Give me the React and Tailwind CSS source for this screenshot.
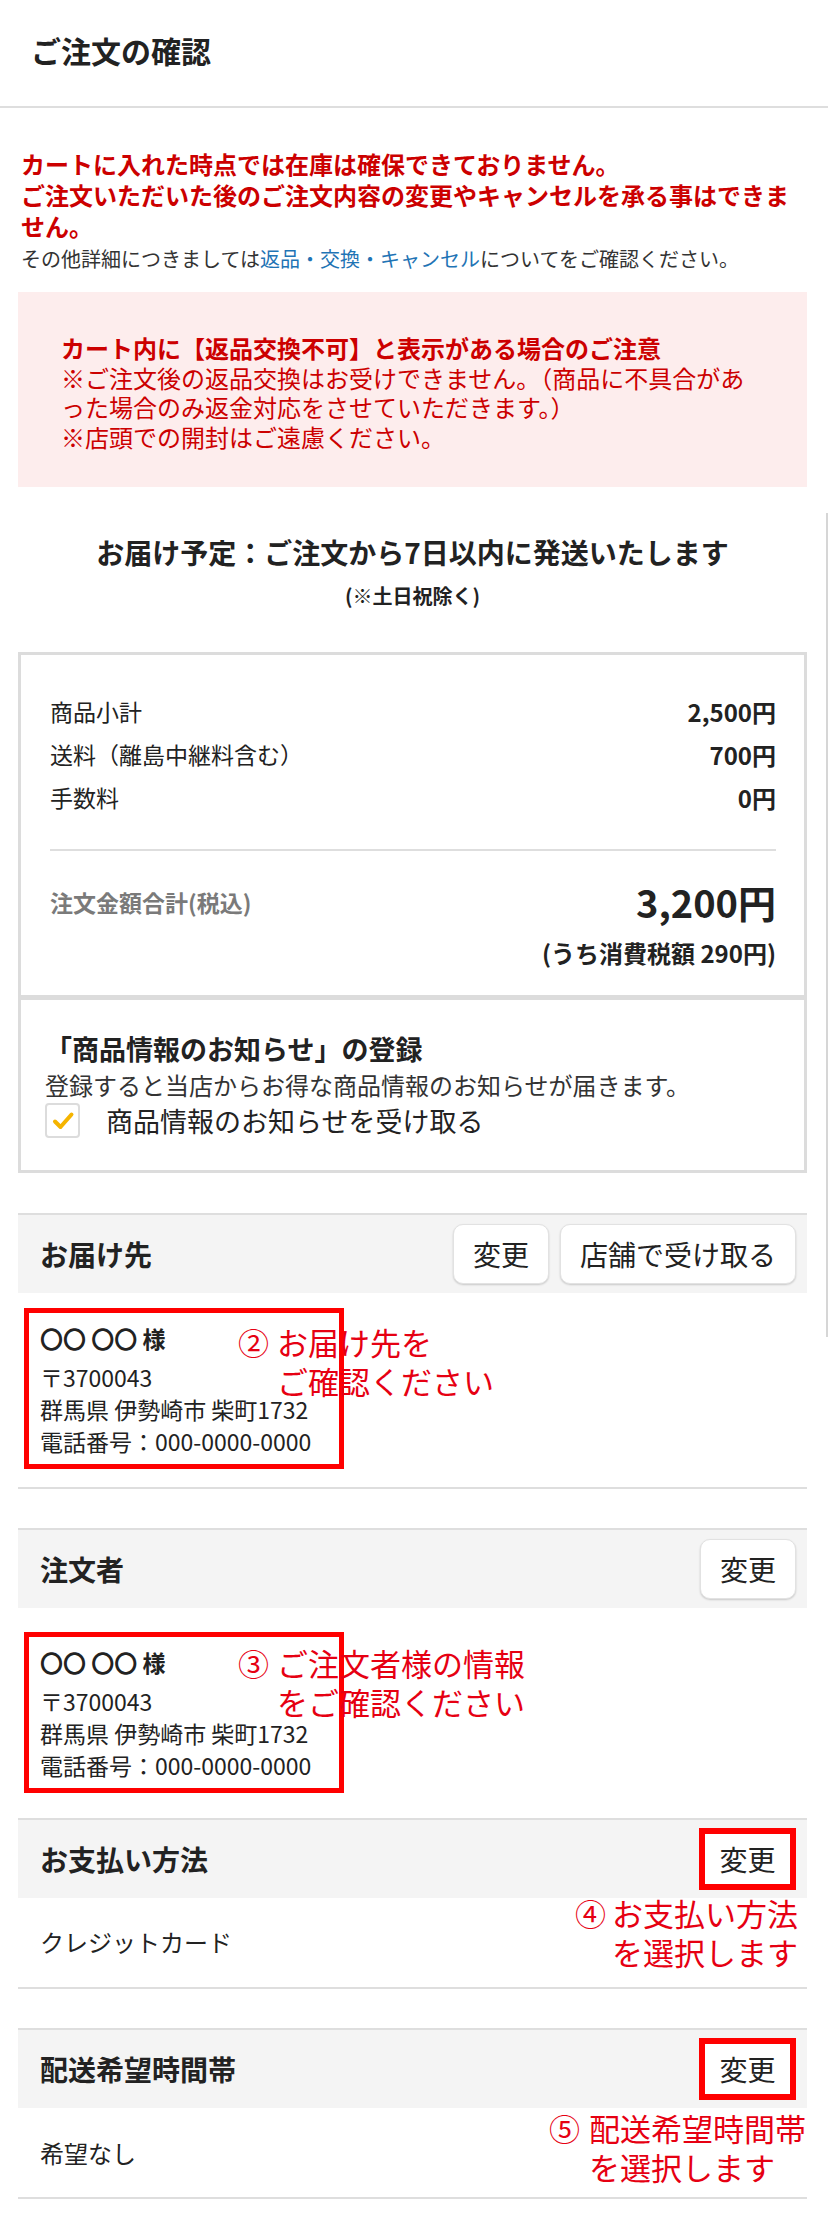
import React from "react";

const rows = [
  ["商品小計", "2,500円"],
  ["送料（離島中継料含む）", "700円"],
  ["手数料", "0円"],
];

function ChangeButton({ label = "変更", wide, marked }) {
  if (marked) {
    return (
      <button className="h-[62px] w-[97px] bg-white border-[6px] border-[#f00] text-[28px] text-[#222]">
        {label}
      </button>
    );
  }
  return (
    <button
      className={`h-[60px] ${wide ? "w-[236px]" : "w-[96px]"} rounded-[10px] bg-white border border-[#e2e2e2] shadow-[0_1px_2px_rgba(0,0,0,0.18)] text-[28px] text-[#222]`}
    >
      {label}
    </button>
  );
}

function SectionBar({ title, children }) {
  return (
    <div className="flex items-center justify-between h-[80px] bg-[#f4f4f4] border-t-2 border-[#dedede] pl-[22px] pr-[11px]">
      <h3 className="text-[28px] leading-[36px] font-bold text-[#222]">{title}</h3>
      <div className="flex gap-[11px]">{children}</div>
    </div>
  );
}

function AddressBox() {
  return (
    <div className="w-[320px] border-[5px] border-[#f00] pl-[11px] pt-[9px] pb-[7px] text-[23px] text-[#222]">
      <p className="font-bold leading-[32px]">〇〇 〇〇 様</p>
      <div className="mt-[7px] leading-[32px]">
        <p>〒3700043</p>
        <p>群馬県 伊勢崎市 柴町1732</p>
        <p>電話番号：000-0000-0000</p>
      </div>
    </div>
  );
}

function Note({ mark, lines, className, markWidth }) {
  return (
    <div
      className={`absolute flex whitespace-nowrap text-[31px] leading-[39px] text-[#e60012] ${className}`}
    >
      <span className={markWidth}>{mark}</span>
      <div>
        {lines.map((l) => (
          <p key={l}>{l}</p>
        ))}
      </div>
    </div>
  );
}

export default function App() {
  return (
    <div className="relative w-[828px] min-h-[2228px] bg-white font-['Noto_Sans_CJK_JP','Noto_Sans',sans-serif] text-[#222] pb-[29px]">
      <div className="absolute right-0 top-[513px] h-[824px] w-[2px] bg-[#d6d6d6]" />

      <header className="h-[108px] flex items-center pl-[31px] pb-[6px] border-b-2 border-[#dedede]">
        <h1 className="text-[30px] font-bold text-[#222]">ご注文の確認</h1>
      </header>

      <div className="pl-[21px] pr-[20px]">
        <div className="mt-[40px] text-[24px] leading-[31px] font-bold text-[#cc0000]">
          <p>カートに入れた時点では在庫は確保できておりません。</p>
          <p>ご注文いただいた後のご注文内容の変更やキャンセルを承る事はできません。</p>
        </div>
        <p className="mt-[3px] text-[20px] leading-[30px] text-[#333]">
          その他詳細につきましては
          <a className="text-[#1f74b5]">返品・交換・キャンセル</a>
          についてをご確認ください。
        </p>
      </div>

      <div className="ml-[18px] mr-[21px]">
        <div className="mt-[18px] h-[195px] bg-[#fdeded] pl-[43px] pr-[43px] pt-[41px] text-[24px] leading-[29.5px] text-[#cc0000]">
          <p className="font-bold">カート内に【返品交換不可】と表示がある場合のご注意</p>
          <p>
            ※ご注文後の返品交換はお受けできません。（商品に不具合があ
            <br />
            った場合のみ返金対応をさせていただきます。）
          </p>
          <p>※店頭での開封はご遠慮ください。</p>
        </div>

        <div className="mt-[45px] text-center font-bold">
          <p className="text-[28px] leading-[40px]">お届け予定：ご注文から7日以内に発送いたします</p>
          <p className="mt-[10px] text-[20px] leading-[28px]">(※土日祝除く)</p>
        </div>

        <div className="mt-[42px] border-[3px] border-[#dcdcdc]">
          <div className="pl-[29px] pr-[28px] pt-[35px] pb-[27px]">
            {rows.map(([k, v]) => (
              <div key={k} className="flex justify-between items-center h-[43px]">
                <span className="text-[23px]">{k}</span>
                <span className="text-[24px] font-bold">{v}</span>
              </div>
            ))}
            <div className="mt-[30px] h-[2px] bg-[#dedede]" />
            <div className="mt-[29px] flex justify-between items-center">
              <span className="text-[23px] font-bold text-[#7a7a7a]">注文金額合計(税込)</span>
              <span className="text-[38px] leading-[44px] font-bold">3,200円</span>
            </div>
            <p className="mt-[14px] text-right text-[24px] leading-[30px] font-bold">
              (うち消費税額 290円)
            </p>
          </div>
          <div className="border-t-[5px] border-[#dcdcdc] pl-[24px] pt-[31px] pb-[32px]">
            <p className="text-[27px] leading-[36px] font-bold">「商品情報のお知らせ」の登録</p>
            <p className="mt-[2px] text-[24px] leading-[32px] text-[#333]">
              登録すると当店からお得な商品情報のお知らせが届きます。
            </p>
            <label className="mt-[2px] flex items-center">
              <span className="w-[35px] h-[35px] rounded-[4px] border-2 border-[#dcdcdc] flex items-center justify-center">
                <svg viewBox="0 0 24 24" className="w-[24px] h-[24px]">
                  <path
                    d="M4 12.5l5.5 5.5L20.5 5.5"
                    fill="none"
                    stroke="#f5b400"
                    strokeWidth="4"
                    strokeLinecap="round"
                    strokeLinejoin="round"
                  />
                </svg>
              </span>
              <span className="ml-[26px] text-[27px] leading-[35px]">商品情報のお知らせを受け取る</span>
            </label>
          </div>
        </div>

        <section className="mt-[40px]">
          <SectionBar title="お届け先">
            <ChangeButton />
            <ChangeButton label="店舗で受け取る" wide />
          </SectionBar>
          <div className="relative pt-[15px] pb-[18px] pl-[6px] border-b-2 border-[#dedede]">
            <AddressBox />
            <Note
              mark="②"
              markWidth="w-[39px]"
              lines={["お届け先を", "ご確認ください"]}
              className="left-[220px] top-[29px]"
            />
          </div>
        </section>

        <section className="mt-[39px]">
          <SectionBar title="注文者">
            <ChangeButton />
          </SectionBar>
          <div className="relative pt-[24px] pl-[6px]">
            <AddressBox />
            <Note
              mark="③"
              markWidth="w-[39px]"
              lines={["ご注文者様の情報", "をご確認ください"]}
              className="left-[220px] top-[35px]"
            />
          </div>
        </section>

        <section className="relative mt-[25px]">
          <SectionBar title="お支払い方法">
            <ChangeButton marked />
          </SectionBar>
          <div className="pl-[22px] pt-[28px] pb-[29px] border-b-2 border-[#dedede]">
            <p className="text-[24px] leading-[32px]">クレジットカード</p>
          </div>
          <Note
            mark="④"
            markWidth="w-[37px]"
            lines={["お支払い方法", "を選択します"]}
            className="left-[557px] top-[75px]"
          />
        </section>

        <section className="relative mt-[39px]">
          <SectionBar title="配送希望時間帯">
            <ChangeButton marked />
          </SectionBar>
          <div className="pl-[22px] pt-[29px] pb-[28px] border-b-2 border-[#dedede]">
            <p className="text-[24px] leading-[32px]">希望なし</p>
          </div>
          <Note
            mark="⑤"
            markWidth="w-[40px]"
            lines={["配送希望時間帯", "を選択します"]}
            className="left-[531px] top-[80px]"
          />
        </section>
      </div>
    </div>
  );
}
